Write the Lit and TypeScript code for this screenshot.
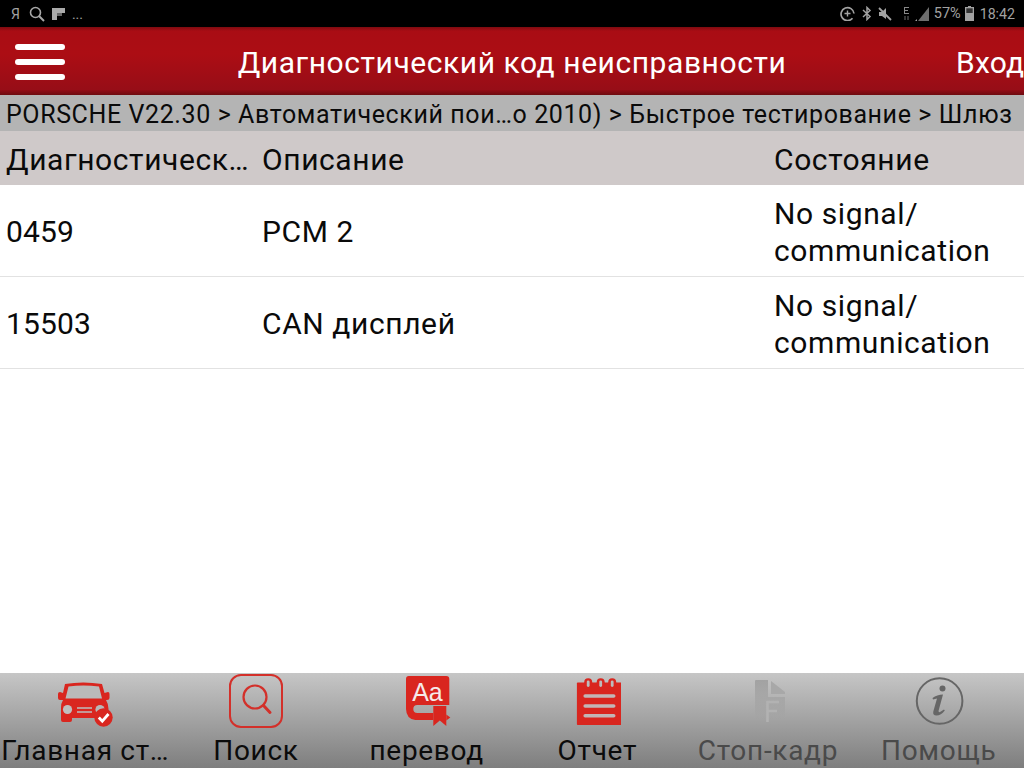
import { LitElement, html, css, svg } from "lit";
import { customElement } from "lit/decorators.js";

const RED = "#d9261f";

const carIcon = svg`<svg class="ico" width="56" height="56" viewBox="0 -9 56 56">
  <path fill="${RED}" d="M8 2 Q26 -1 45 2 L47.5 11 L51 10 Q52.5 10 52.5 12 L52.5 16 Q52.5 18 50 18 L49 18 Q51.5 22 51.5 27 L51.5 36 L15 36 L15 38 Q15 40 13 40 L6 40 Q4 40 4 38 L4 26 Q4 21 6 18 L3 18 Q1 18 1 16 L1 12 Q1 10 3 10 L6 11 Z"/>
  <path fill="#bababa" d="M11.5 4.5 Q26 2.5 42 4.5 L45 16.5 L8.5 16.5 Z"/>
  <circle cx="10.5" cy="27.5" r="4.6" fill="#bfbfbf"/>
  <path stroke="#bdbdbd" stroke-width="1.6" d="M20 26 H35 M20 30 H35" fill="none"/>
  <circle cx="43" cy="27.5" r="4.6" fill="#b8b8b8"/>
  <circle cx="46.5" cy="35.5" r="9.2" fill="${RED}"/>
  <path d="M41.8 35.5 L45.3 39.2 L51.5 32" fill="none" stroke="#fff" stroke-width="2.8"/>
</svg>`;

const searchIcon = svg`<svg class="ico" width="56" height="56" viewBox="0 0 56 56">
  <rect x="2" y="2" width="52" height="52" rx="11" fill="none" stroke="#d3302a" stroke-width="2"/>
  <circle cx="27" cy="24" r="11.5" fill="none" stroke="#d3302a" stroke-width="2.2"/>
  <path d="M35.5 32.5 L42 39.5" stroke="#d3302a" stroke-width="3" stroke-linecap="round"/>
</svg>`;

const bookIcon = svg`<svg class="ico" width="48" height="56" viewBox="-2.3 -3 48 56">
  <path fill="${RED}" d="M3.5 0 H41 Q44 0 44 3 V29 H12 Q8 29 8 33 Q8 37 12 37 H28 V44 H10 Q1 43 0.7 33 V3 Q0.7 0 3.5 0 Z"/>
  <path fill="${RED}" d="M28 30 H41 V50 L34.5 44.5 L28 50 Z"/>
  <path fill="${RED}" d="M41 38.5 L45 41.5 L41 44.5 Z"/>
  <text x="22.2" y="24.5" text-anchor="middle" class="aa">Aa</text>
</svg>`;

const reportIcon = svg`<svg class="ico" width="47" height="56" viewBox="-2.2 -5 47 56">
  <path fill="${RED}" d="M1.5 4.5 H45 Q45.7 4.5 45.7 5.5 V46 Q45.7 47 45 47 H1.5 Q0.7 47 0.7 46 V5.5 Q0.7 4.5 1.5 4.5 Z"/>
  <g fill="${RED}"><rect x="8" y="0.3" width="8" height="11" rx="4"/><rect x="20.5" y="0.3" width="8" height="11" rx="4"/><rect x="32" y="0.3" width="8" height="11" rx="4"/></g>
  <g fill="#bcbcbc"><rect x="10.6" y="2.4" width="2.8" height="6.5" rx="1.4"/><rect x="23.1" y="2.4" width="2.8" height="6.5" rx="1.4"/><rect x="34.6" y="2.4" width="2.8" height="6.5" rx="1.4"/></g>
  <path d="M9 18 H37.5 M9 28 H37.5 M9 37.7 H37.5" stroke="#c2b6b6" stroke-width="3.6" stroke-linecap="round"/>
</svg>`;

const freezeIcon = svg`<svg class="ico" width="34" height="56" viewBox="-3 -7 34 56">
  <defs><linearGradient id="fg" x1="0" y1="0" x2="0" y2="1"><stop offset="0" stop-color="#a2a2a2"/><stop offset=".75" stop-color="#a2a2a2" stop-opacity=".5"/><stop offset="1" stop-color="#a2a2a2" stop-opacity="0"/></linearGradient></defs>
  <path fill="url(#fg)" d="M1 1 Q1 0 2 0 H14 V17 H34 V42 H1 Z"/>
  <path fill="#a8a8a8" d="M17 1 L33.5 14 H17 Z"/>
  <path d="M13.5 42 V22 H25 M13.5 31 H23" fill="none" stroke="#b2b2b2" stroke-width="2.6"/>
</svg>`;

const infoIcon = svg`<svg class="ico" width="50" height="56" viewBox="0 0 50 56">
  <circle cx="25.6" cy="28" r="22.8" fill="none" stroke="#666" stroke-width="2"/>
  <circle cx="28.5" cy="15.5" r="3" fill="#666"/>
  <path fill="#666" d="M18.5 25 Q23 21.5 29 21.5 L24.5 38 Q24.5 39.5 26 39 L30 36.5 L30.8 37.5 Q27 42.5 22.5 42.5 Q18.5 42.5 19.3 38.5 L23 25.5 L19 26.5 Z"/>
</svg>`;

const tabs = [
  { label: "Главная ст…", icon: carIcon },
  { label: "Поиск", icon: searchIcon },
  { label: "перевод", icon: bookIcon },
  { label: "Отчет", icon: reportIcon },
  { label: "Стоп-кадр", icon: freezeIcon, dim: true },
  { label: "Помощь", icon: infoIcon, dim: true },
];

const rows = [
  ["0459", "PCM 2"],
  ["15503", "CAN дисплей"],
];

@customElement("app-root")
export class AppRoot extends LitElement {
  static styles = css`
    :host { display: flex; flex-direction: column; width: 1024px; height: 768px; overflow: hidden; background: #fff; font-family: Roboto, sans-serif; color: #0a0a0a; }
    .status { height: 27px; background: #000; color: #a2a2a2; display: flex; align-items: center; justify-content: space-between; padding: 0 9px 0 11px; font-size: 14.5px; flex: none; }
    .side { display: flex; align-items: center; }
    .status svg { display: block; flex: none; }
    .ya { font-size: 14px; margin-right: 9px; }
    .m3 { margin-left: 7px; }
    .dots { font-size: 14px; margin-left: 7px; }
    .bt { margin-left: 7px; }
    .mute { margin-left: 6px; }
    .edge { margin-left: 11px; }
    .signal { margin-left: 5px; }
    .pct { margin-left: 5px; }
    .batt { margin-left: 4px; }
    .time { margin-left: 6px; font-size: 14.2px; }
    .header { height: 68px; flex: none; background: linear-gradient(#7d0b10 0, #a90d14 4px, #ac0d14 40%, #970d17 92%, #6e0b10 100%); color: #fff; display: grid; grid-template-columns: 68px 1fr 68px; align-items: center; }
    .burger { width: 50px; margin: 2px 0 0 15px; display: flex; flex-direction: column; gap: 9px; }
    .burger i { display: block; height: 6px; border-radius: 3px; background: #fff; }
    .title { font-size: 30px; text-align: center; letter-spacing: .56px; padding-top: 2px; white-space: nowrap; }
    .login { font-size: 30px; letter-spacing: .2px; padding-top: 2px; white-space: nowrap; }
    .crumb { height: 36px; flex: none; box-sizing: border-box; background: #b4b4b4; font-size: 25px; letter-spacing: .6px; line-height: 36px; padding: 2px 0 0 6px; white-space: nowrap; overflow: hidden; }
    .row { display: grid; grid-template-columns: 256px 512px 256px; align-items: center; font-size: 30px; letter-spacing: .6px; }
    .row > div { padding: 2px 0 0 6px; }
    .row > .code { letter-spacing: .15px; }
    .thead { height: 54px; flex: none; background: #cfc9c9; }
    .tr { height: 92px; flex: none; box-sizing: border-box; border-bottom: 1px solid #e2e2e2; line-height: 37px; }
    .spacer { flex: 1; }
    .tabs { height: 95px; flex: none; background: linear-gradient(#c6c6c6, #7e7e7e); display: grid; grid-template-columns: repeat(6, 1fr); }
    .tab { display: flex; flex-direction: column; align-items: center; min-width: 0; }
    .icon-box { height: 56px; display: flex; justify-content: center; }
    .tab-label { font-size: 28px; letter-spacing: .7px; line-height: 31px; margin-top: 6px; white-space: nowrap; color: #0b0b0b; }
    .dim .tab-label { color: #4a4a4a; }
    .ico { display: block; }
    .aa { font: 25px "Liberation Sans", Arial, sans-serif; fill: #f5eaea; }
  `;

  render() {
    return html`
      <div class="status">
        <div class="side">
          <span class="ya">Я</span>
          <svg width="16" height="16" viewBox="0 0 16 16"><circle cx="6.5" cy="6.5" r="5" fill="none" stroke="#a8a8a8" stroke-width="1.6"/><path d="M10 10 L15 15" stroke="#a8a8a8" stroke-width="2"/></svg>
          <svg class="m3" width="13" height="12" viewBox="0 0 13 12"><path fill="#aaa" d="M0 0 H13 V5 H5 V12 H0 Z"/><path fill="#666" d="M5 5 H10 V8 H5 Z"/></svg>
          <span class="dots">...</span>
        </div>
        <div class="side">
          <svg width="15" height="15" viewBox="0 0 15 15"><path d="M12.5 12.3 A6.5 6.5 0 1 1 14 7.5" fill="none" stroke="#a2a2a2" stroke-width="1.7"/><path d="M7.5 4.5 V10.5 M4.5 7.5 H10.5" stroke="#a2a2a2" stroke-width="1.4"/></svg>
          <svg class="bt" width="10" height="15" viewBox="0 0 10 15"><path d="M1 4 L8 10.5 L5 13.5 V1.5 L8 4.5 L1 11" fill="none" stroke="#a2a2a2" stroke-width="1.5"/></svg>
          <svg class="mute" width="14" height="14" viewBox="0 0 14 14"><path fill="#a2a2a2" d="M1 5 H4 L8 1 V12 L4 9 H1 Z"/><path d="M1 1 L13 13" stroke="#a2a2a2" stroke-width="1.8"/></svg>
          <svg class="edge" width="7" height="14" viewBox="0 0 7 14"><path fill="#888" d="M1 0 H6 V1 H2 V3 H5 V4 H2 V6 H6 V7 H1 Z"/><path d="M2 9 V13 M5 9 V13" stroke="#555" stroke-width="1.3"/></svg>
          <svg class="signal" width="14" height="14" viewBox="0 0 14 14"><path fill="#6e6e6e" d="M14 0 V14 H3 Z"/><path fill="#a2a2a2" d="M0 14 L2 12 V14 Z"/></svg>
          <span class="pct">57%</span>
          <svg class="batt" width="9" height="15" viewBox="0 0 9 15"><path fill="#a2a2a2" d="M3 0 H6 V1 H9 V15 H0 V1 H3 Z"/><path fill="#333" d="M1.3 2.3 H7.7 V7 H1.3 Z"/></svg>
          <span class="time">18:42</span>
        </div>
      </div>
      <div class="header">
        <div class="burger"><i></i><i></i><i></i></div>
        <div class="title">Диагностический код неисправности</div>
        <div class="login">Вход</div>
      </div>
      <div class="crumb">PORSCHE V22.30 &gt; Автоматический пои…о 2010) &gt; Быстрое тестирование &gt; Шлюз</div>
      <div class="row thead">
        <div>Диагностическ…</div><div>Описание</div><div>Состояние</div>
      </div>
      ${rows.map(
        (r) => html`<div class="row tr"><div class="code">${r[0]}</div><div>${r[1]}</div><div>No signal/<br />communication</div></div>`
      )}
      <div class="spacer"></div>
      <div class="tabs">
        ${tabs.map(
          (t) => html`<div class="tab ${t.dim ? "dim" : ""}"><div class="icon-box">${t.icon}</div><div class="tab-label">${t.label}</div></div>`
        )}
      </div>
    `;
  }
}
